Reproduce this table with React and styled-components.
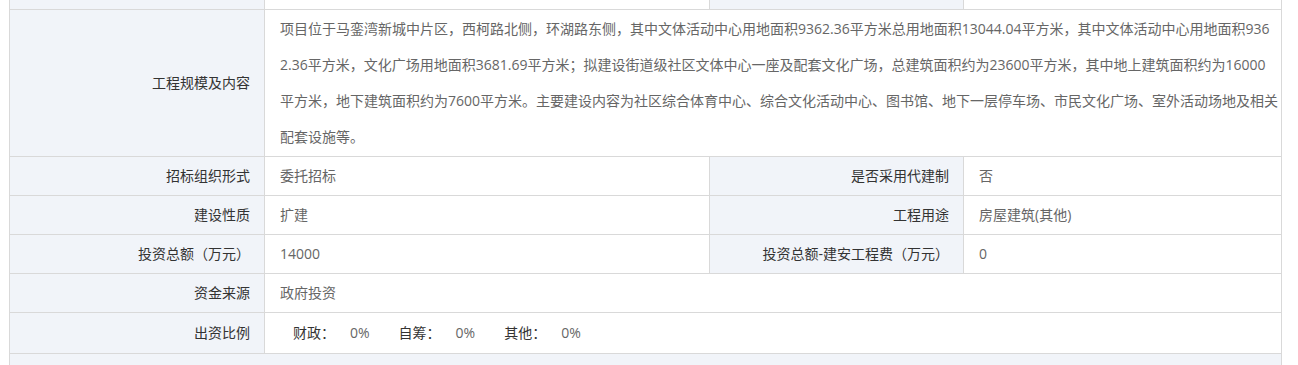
import styled, { createGlobalStyle } from 'styled-components';

const GlobalStyle = createGlobalStyle`
  body {
    margin: 0;
    background: #fff;
    font-family: "Open Sans", "Noto Sans CJK SC", sans-serif;
  }
`;

// the description is wrapped where the source page wraps it
const descriptionLines = [
  '项目位于马銮湾新城中片区，西柯路北侧，环湖路东侧，其中文体活动中心用地面积9362.36平方米总用地面积13044.04平方米，其中文体活动中心用地面积936',
  '2.36平方米，文化广场用地面积3681.69平方米；拟建设街道级社区文体中心一座及配套文化广场，总建筑面积约为23600平方米，其中地上建筑面积约为16000',
  '平方米，地下建筑面积约为7600平方米。主要建设内容为社区综合体育中心、综合文化活动中心、图书馆、地下一层停车场、市民文化广场、室外活动场地及相关',
  '配套设施等。',
];

const pairRows = [
  ['招标组织形式', '委托招标', '是否采用代建制', '否'],
  ['建设性质', '扩建', '工程用途', '房屋建筑(其他)'],
  ['投资总额（万元）', '14000', '投资总额-建安工程费（万元）', '0'],
];

const shares = [
  ['财政：', '0%'],
  ['自筹：', '0%'],
  ['其他：', '0%'],
];

const App = () => {
  return (
    <>
      <GlobalStyle />
      <Page>
        <Grid>
          <Label $short />
          <Value $short />
          <Label $short />
          <Value $short />

          <Label>工程规模及内容</Label>
          <Value $wide>
            {descriptionLines.map(line => (
              <Line key={line}>{line}</Line>
            ))}
          </Value>

          {pairRows.map(([l1, v1, l2, v2]) => (
            <Row key={l1}>
              <Label>{l1}</Label>
              <Value>{v1}</Value>
              <Label>{l2}</Label>
              <Value>{v2}</Value>
            </Row>
          ))}

          <Label>资金来源</Label>
          <Value $wide>政府投资</Value>

          <Label $tall>出资比例</Label>
          <Value $wide $tall>
            <Shares>
              {shares.map(([name, pct]) => (
                <Share key={name}>
                  <ShareName>{name}</ShareName>
                  <span>{pct}</span>
                </Share>
              ))}
            </Shares>
          </Value>

          <Footer />
        </Grid>
      </Page>
    </>
  );
};

export default App;

const Page = styled.div`
  padding-left: 9px;
  height: 365px;
  overflow: hidden;
`;

const Grid = styled.div`
  display: grid;
  grid-template-columns: 254px 444px 253px 317px;
  gap: 1px;
  width: 1271px;
  padding: 0 1px 1px;
  background: #d9d9d9;
  font-size: 14px;
`;

const Row = styled.div`
  display: contents;
`;

const Label = styled.div`
  background: #f1f4f9;
  color: #333;
  padding: ${p => (p.$tall ? '2px' : '1px')} 14px;
  line-height: 36px;
  height: ${p => (p.$short ? '9px' : 'auto')};
  display: flex;
  align-items: center;
  justify-content: flex-end;
  box-sizing: border-box;
`;

const Value = styled.div`
  background: #fff;
  color: #666;
  padding: ${p => (p.$tall ? '2px' : '1px')} 0 ${p => (p.$tall ? '2px' : '1px')} 15px;
  line-height: 36px;
  height: ${p => (p.$short ? '9px' : 'auto')};
  grid-column: ${p => (p.$wide ? 'span 3' : 'auto')};
  box-sizing: border-box;
`;

const Line = styled.div`
  white-space: nowrap;
`;

const Shares = styled.div`
  display: flex;
  gap: 29px;
  padding-left: 13px;
`;

const Share = styled.span`
  display: flex;
  gap: 15px;
`;

const ShareName = styled.span`
  color: #333;
`;

const Footer = styled.div`
  grid-column: 1 / -1;
  background: #f1f4f9;
  height: 30px;
`;
